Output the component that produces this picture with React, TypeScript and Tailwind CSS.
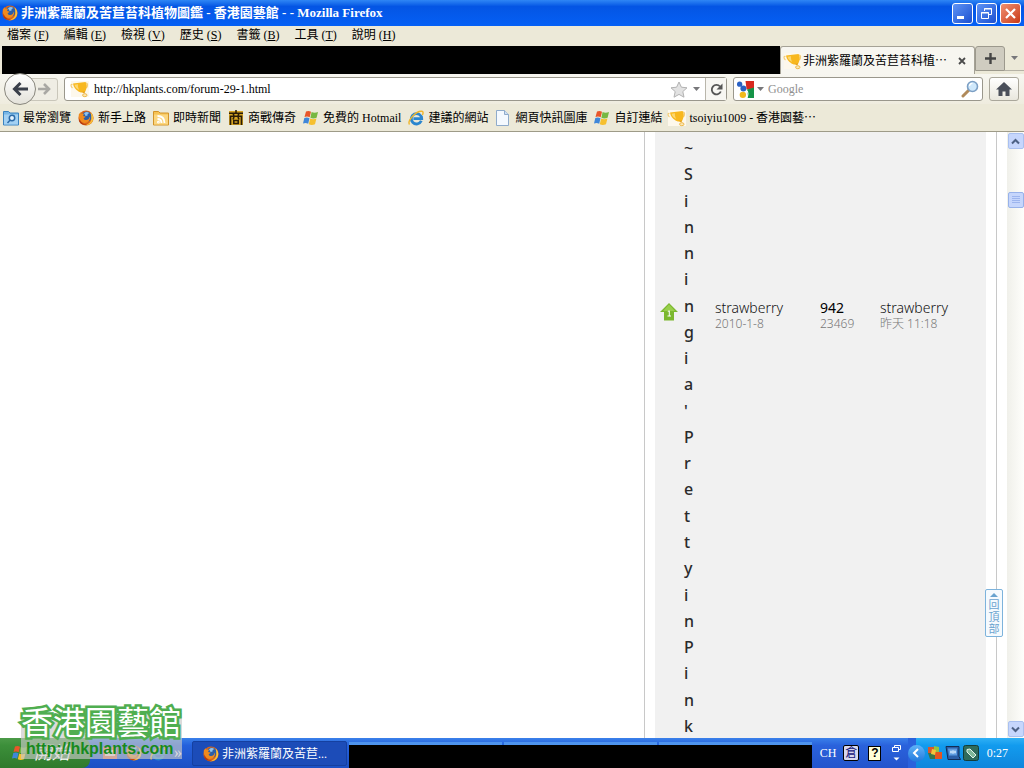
import type { ReactNode } from 'react'

const MENUS = [
  { label: '檔案', hotkey: 'F' },
  { label: '編輯', hotkey: 'E' },
  { label: '檢視', hotkey: 'V' },
  { label: '歷史', hotkey: 'S' },
  { label: '書籤', hotkey: 'B' },
  { label: '工具', hotkey: 'T' },
  { label: '說明', hotkey: 'H' },
]

const THREAD_TITLE = "~Sinningia'PrettyinPink"

function FirefoxIcon() {
  return (
    <svg width="16" height="16" viewBox="0 0 16 16" className="shrink-0">
      <circle cx="8" cy="8" r="7.6" fill="#d9641a" />
      <circle cx="8.6" cy="6.6" r="5.2" fill="#2b5fa8" />
      <path d="M6 3.2c2-1.6 4-1.4 5.4 0-1.6.2-2.2 1-1.8 2.2L7.6 6z" fill="#8fc3ee" />
      <path d="M.8 4.6C1.4 3.4 2 2.6 2.6 2.2l.6 1.6c1-.4 2-.3 2.8.2L5 6l2.6.6c-.4 1.2-1.4 1.2-2 1.8.8 1.8 3.4 2 5 .6.8-.7.6-1.6 1.4-2.2.5 3.6-2 6.2-5.2 6.2C3 13 .4 9 .8 4.6z" fill="#f08a1d" />
      <path d="M12.6 2.6c2.6 2 3.4 5.6 2 8.6-1.6 3.2-5 4.6-8.2 4 4-.4 6.6-3 6.9-6.4.1-2.2-.1-4.2-.7-6.2z" fill="#f9c23c" />
      <path d="M1.6 9c1 3.6 4 5.6 7.4 5.2-3 1.4-6.6.2-7.9-3z" fill="#b5390f" />
    </svg>
  )
}

function TrophyIcon() {
  return (
    <svg width="20" height="18" viewBox="0 0 20 18" className="shrink-0">
      <path d="M1 1h18v16H1z" fill="#fdf8ec" />
      <path d="M2.5 4.5C.5 3.5.5 6.500 2.500 8M16 3c2 0 2 3 .5 5" stroke="#f3cd78" strokeWidth="1.2" fill="none" />
      <path d="M3 3.5 15.500 2C17.500 4.500 17 8.500 15 12 12 13 9.500 12.500 8 11 5.500 9.500 3.500 7 3 3.500z" fill="#f8b81f" />
      <path d="M4.500 4.800 8 4.300c-.3 2 .2 4 1.200 5.700C6.800 9 5.200 7.300 4.500 4.800z" fill="#fcd873" />
      <path d="M11 11.500c1.500.5 3 .3 4-.3l-.5 2.300z" fill="#e39c16" />
      <ellipse cx="14.800" cy="15.200" rx="2.200" ry="1.500" fill="#fbe9b6" stroke="#efb84a" />
    </svg>
  )
}

function WindowsIcon() {
  return (
    <svg width="16" height="16" viewBox="0 0 16 16" className="shrink-0">
      <path d="M3 1.500c1.800-.9 3.400-.7 5 .2L6.700 7.300C5 6.400 3.400 6.300 1.500 7.100z" fill="#e8562a" />
      <path d="M8.600 2.100c1.900.9 4 .9 6.400 0L13.600 7.700c-2.200.9-4.300.9-6.200 0z" fill="#77b843" />
      <path d="M1.300 8c1.900-.8 3.500-.7 5.200.2L5.200 13.800C3.500 12.900 1.800 12.800 0 13.600z" fill="#3f87d9" />
      <path d="M7.200 8.600c1.900.9 4 .9 6.200 0L12 14.200c-2.200.9-4.300.9-6.200 0z" fill="#f6c02f" />
    </svg>
  )
}

function FolderIcon({ kind }: { kind: 'search' | 'feed' }) {
  const feed = kind === 'feed'
  return (
    <svg width="16" height="16" viewBox="0 0 16 16" className="shrink-0">
      <path d="M.5 1.500h5l1.500 1.500h8.500v12H.5z" fill={feed ? '#f6c254' : '#77b6e6'} stroke={feed ? '#d2942a' : '#3a83c0'} />
      <path d="M1 4.500h14v10H1z" fill={feed ? '#fbd67f' : '#a3d1f3'} />
      {feed ? (
        <g fill="none" stroke="#fff" strokeWidth="1.8">
          <path d="M4.500 6c4.500 0 7 2.500 7 7M4.500 9c2.500 0 4 1.500 4 4" />
          <circle cx="5.400" cy="12.200" r=".5" />
        </g>
      ) : (
        <g fill="none" stroke="#2c6ba8" strokeWidth="1.5">
          <circle cx="9" cy="8" r="2.700" fill="#e6f4ff" />
          <path d="M7.200 10 4.500 13" />
        </g>
      )}
    </svg>
  )
}

function ShopIcon() {
  return (
    <svg width="16" height="16" viewBox="0 0 16 16" className="shrink-0">
      <path d="M1 1h14v14H1z" fill="#d8a522" />
      <g fill="none" stroke="#2b1c06" strokeWidth="1.6">
        <path d="M8 0v3M1 3.300h14M5 3.500l1 2M11 3.500l-1 2M2.500 15V6.200h11V15M6 7l-1 2.500M10 7l1 2.500" />
        <path d="M5.800 10.500h4.400v3H5.800z" />
      </g>
    </svg>
  )
}

function IeIcon() {
  return (
    <svg width="16" height="16" viewBox="0 0 16 16" className="shrink-0">
      <path d="M13.300 10.800A5.200 5.200 0 1 1 13.700 8.600H5.400" fill="none" stroke="#2a86cf" strokeWidth="2.8" />
      <path d="M1.500 14.500C-1 11 8 .5 14 1.300c1.600.4 1.200 2.200.4 3.700" fill="none" stroke="#efb62c" strokeWidth="1.4" />
    </svg>
  )
}

function PageIcon() {
  return (
    <svg width="16" height="16" viewBox="0 0 16 16" className="shrink-0">
      <path d="M1.500.5h8l4 4v11h-12z" fill="#f4f9ff" stroke="#8fabcb" />
      <path d="M9.500.5v4h4" fill="#cfe0f3" stroke="#8fabcb" />
    </svg>
  )
}

function GoogleIcon() {
  return (
    <svg width="17" height="17" viewBox="0 0 16 16" className="shrink-0">
      <path d="M8 0h8v7L9 8z" fill="#d8291f" />
      <path d="M9.500 8l6.500-2v10H10z" fill="#159447" />
      <circle cx="2.500" cy="3" r="2.500" fill="#2961c4" />
      <circle cx="6" cy="7" r="2.800" fill="#2961c4" />
      <circle cx="5.500" cy="13" r="3" fill="#f1b91c" />
      <path d="M9 9c1.500 1 2 4 0 7" stroke="#fff" fill="none" />
    </svg>
  )
}

function Caret() {
  return (
    <svg width="7" height="4" viewBox="0 0 7 4" className="shrink-0">
      <path d="M0 0h7L3.500 4z" fill="#77777a" />
    </svg>
  )
}

const BOOKMARKS: { label: string; icon: ReactNode }[] = [
  { label: '最常瀏覽', icon: <FolderIcon kind="search" /> },
  { label: '新手上路', icon: <FirefoxIcon /> },
  { label: '即時新聞', icon: <FolderIcon kind="feed" /> },
  { label: '商戰傳奇', icon: <ShopIcon /> },
  { label: '免費的 Hotmail', icon: <WindowsIcon /> },
  { label: '建議的網站', icon: <IeIcon /> },
  { label: '網頁快訊圖庫', icon: <PageIcon /> },
  { label: '自訂連結', icon: <WindowsIcon /> },
  { label: 'tsoiyiu1009 - 香港園藝⋯', icon: <TrophyIcon /> },
]

function TitleBar() {
  return (
    <header className="flex h-[26px] shrink-0 items-center bg-linear-to-b from-[#2f86f5] via-[#0455e4] via-25% to-[#0560f5] pr-[3px] pl-0.5">
      <FirefoxIcon />
      <h1 className="ml-[3px] flex-1 truncate text-[13px] leading-5 font-bold text-white">
        非洲紫羅蘭及苦苣苔科植物圖鑑 - 香港園藝館 - - Mozilla Firefox
      </h1>
      <div className="flex gap-[3px]">
        <button aria-label="最小化" className="h-[21px] w-[21px] rounded-[3px] border border-white bg-linear-to-br from-[#5f93f5] to-[#1c4fd0]">
          <svg width="19" height="19" viewBox="0 0 19 19"><path d="M4 12h7v3H4z" fill="#fff" /></svg>
        </button>
        <button aria-label="還原" className="h-[21px] w-[21px] rounded-[3px] border border-white bg-linear-to-br from-[#5f93f5] to-[#1c4fd0]">
          <svg width="19" height="19" viewBox="0 0 19 19" fill="none" stroke="#fff">
            <path d="M7.500 7V4.500h7v6H12M7 5h8M4.500 8.500h7v6h-7zM4 9h8" />
          </svg>
        </button>
        <button aria-label="關閉" className="h-[21px] w-[21px] rounded-[3px] border border-white bg-linear-to-br from-[#f09070] to-[#c8360f]">
          <svg width="19" height="19" viewBox="0 0 19 19"><path d="M5 5l9 9M14 5l-9 9" stroke="#fff" strokeWidth="2.2" /></svg>
        </button>
      </div>
    </header>
  )
}

function NavBar() {
  return (
    <div className="flex h-[30px] shrink-0 items-center bg-linear-to-b from-[#f7f6f0] to-[#efecdf] pr-[5px] pl-1">
      <button aria-label="上一頁" className="z-10 flex h-8 w-8 shrink-0 items-center justify-center rounded-full border border-[#88867d] bg-linear-to-b from-white to-[#e4e2da]">
        <svg width="16" height="14" viewBox="0 0 16 14" fill="none" stroke="#3a3f4a" strokeWidth="3">
          <path d="M8.500 1 2.500 7l6 6M3 7h13" />
        </svg>
      </button>
      <button aria-label="下一頁" className="-ml-1.5 flex h-[23px] w-7 shrink-0 items-center justify-center rounded-r-[3px] border border-[#c9c6ba] bg-[#efede4]">
        <svg width="13" height="12" viewBox="0 0 13 12" fill="none" stroke="#a9a8a4" strokeWidth="2.600">
          <path d="M6 1l5 5-5 5M11 6H0" />
        </svg>
      </button>
      <div className="ml-1.5 flex h-6 flex-1 items-center rounded-[3px] border border-[#9a978c] bg-white">
        <span className="ml-[5px]"><TrophyIcon /></span>
        <input aria-label="網址" defaultValue="http://hkplants.com/forum-29-1.html" className="ml-1 min-w-0 flex-1 bg-transparent text-xs outline-none" />
        <button aria-label="加入書籤">
          <svg width="18" height="17" viewBox="0 0 18 17">
            <path d="M9 1l2.400 5.200 5.600.6-4.200 3.800 1.200 5.600L9 13.400 4 16.200l1.200-5.600L1 6.800l5.600-.6z" fill="#e2e2e2" stroke="#b2b2b2" />
          </svg>
        </button>
        <span className="mx-[5px]"><Caret /></span>
        <button aria-label="重新載入" className="flex h-full w-[21px] items-center justify-center border-l border-[#b9b6ab] bg-[#f7f6f2]">
          <svg width="13" height="13" viewBox="0 0 13 13">
            <path d="M10.800 8.500A4.700 4.700 0 1 1 10 3.500" fill="none" stroke="#555" strokeWidth="1.800" />
            <path d="M12.500.5v6h-6z" fill="#555" />
          </svg>
        </button>
      </div>
      <div className="ml-1.5 flex h-6 w-[250px] items-center rounded-[3px] border border-[#9a978c] bg-white px-[3px]">
        <GoogleIcon />
        <span className="ml-[3px]"><Caret /></span>
        <input aria-label="搜尋" placeholder="Google" className="ml-1 min-w-0 flex-1 bg-transparent text-xs outline-none placeholder:text-[#8f8f8f]" />
        <button aria-label="開始搜尋" className="shrink-0">
          <svg width="18" height="18" viewBox="0 0 18 18">
            <path d="M2 16l6-6" stroke="#b08a5a" strokeWidth="3" strokeLinecap="round" />
            <circle cx="11.500" cy="6.500" r="5" fill="#cfe8fb" stroke="#7c9fc4" strokeWidth="1.600" />
            <path d="M8.500 6a3 3 0 0 1 3-2.600" stroke="#fff" strokeWidth="1.300" fill="none" />
          </svg>
        </button>
      </div>
      <button aria-label="首頁" className="ml-1.5 flex h-6 w-[30px] items-center justify-center rounded-[3px] border border-[#aaa79b] bg-linear-to-b from-white to-[#e9e7dd]">
        <svg width="16" height="14" viewBox="0 0 16 14">
          <path d="M8 0l8 7.500h-2.500V14h-4V9.500h-3V14h-4V7.500H0z" fill="#4a4f5a" />
        </svg>
      </button>
    </div>
  )
}

function ForumPage() {
  return (
    <main className="relative flex min-h-0 flex-1 overflow-hidden bg-white font-['Noto_Sans','Noto_Sans_CJK_TC',sans-serif]">
      <div className="flex-1" />
      <div className="w-[353px] border-x border-[#c8c8c8] px-2.5">
        <table className="h-full w-full table-fixed bg-[#f1f1f1]">
          <colgroup>
            <col className="w-[29px]" />
            <col className="w-[31px]" />
            <col className="w-[105px]" />
            <col className="w-[60px]" />
            <col />
          </colgroup>
          <tbody>
            <tr className="h-full align-top">
              <td className="pt-[171px] pl-[5px]">
                <svg width="18" height="18" viewBox="0 0 18 18">
                  <path d="M9 0l9 9h-4v8.500H4V9H0z" fill="#7cb82f" />
                  <path d="M9 1.500L15 8H3z" fill="#98cf4c" />
                  <path d="M7.800 8.500 9.300 7.800V13M7.500 13h3.500" stroke="#fff" fill="none" />
                </svg>
              </td>
              <td className="h-full">
                <a href="#thread" className="-mb-1 flex h-full flex-col justify-between pt-1 text-base leading-6 font-medium text-[#2b2b2b]">
                  {THREAD_TITLE.split('').map((letter, i) => (
                    <span key={i}>{letter}</span>
                  ))}
                </a>
              </td>
              <td className="pt-[168px]">
                <a href="#author" className="block text-sm leading-4 font-light text-[#111]">strawberry</a>
                <span className="block text-xs leading-4 font-light text-[#777]">2010-1-8</span>
              </td>
              <td className="pt-[168px]">
                <a href="#replies" className="block text-sm leading-4 text-black">942</a>
                <span className="block text-xs leading-4 font-light text-[#777]">23469</span>
              </td>
              <td className="pt-[168px]">
                <a href="#last" className="block text-sm leading-4 font-light text-[#111]">strawberry</a>
                <a href="#last" className="block text-xs leading-4 font-light text-[#777]">昨天 11:18</a>
              </td>
            </tr>
          </tbody>
        </table>
      </div>
      <div className="w-2.5" />

      {/* Scrollbar */}
      <div className="flex w-[17px] flex-col items-center bg-linear-to-r from-[#f0f0ea] to-[#fefefb] py-px">
        <button aria-label="向上捲動" className="flex h-4 w-4 items-center justify-center rounded-[2px] border border-[#a9c0f0] bg-[#c6d6fc]">
          <svg width="9" height="7" viewBox="0 0 9 7"><path d="M1 5.500 4.500 2 8 5.500" fill="none" stroke="#4d6185" strokeWidth="2" /></svg>
        </button>
        <div className="mt-[43px] flex h-4 w-4 items-center justify-center rounded-[2px] border border-[#98b2ea] bg-[#c6d6fc]">
          <svg width="8" height="8" viewBox="0 0 8 8"><path d="M0 .5h8M0 2.500h8M0 4.500h8M0 6.500h8" stroke="#9db5ee" /></svg>
        </div>
        <button aria-label="向下捲動" className="mt-auto flex h-4 w-4 items-center justify-center rounded-[2px] border border-[#a9c0f0] bg-[#c6d6fc]">
          <svg width="9" height="7" viewBox="0 0 9 7"><path d="M1 1.500 4.500 5 8 1.500" fill="none" stroke="#4d6185" strokeWidth="2" /></svg>
        </button>
      </div>

      <a href="#top" className="absolute right-[21px] bottom-[101px] flex w-[18px] flex-col items-center rounded-[2px] border border-[#7db3dc] bg-[#f5fafe] pt-[3px] pb-px text-[11px] leading-3 text-[#6aa3cf]">
        <svg width="8" height="4" viewBox="0 0 8 4" className="mb-0.5"><path d="M4 0l4 4H0z" fill="#6aa3cf" /></svg>
        <span>回</span>
        <span>頂</span>
        <span>部</span>
      </a>
    </main>
  )
}

function Taskbar() {
  return (
    <footer className="flex h-[30px] shrink-0 items-stretch bg-linear-to-b from-[#3a80ea] via-[#2460dc] via-25% to-[#1c50c4] text-white">
      <button className="flex w-[90px] items-center gap-1.5 rounded-r-lg bg-linear-to-b from-[#4c9a48] via-[#3c8f3a] via-25% to-[#2f7a2c] pl-3 text-lg leading-6 text-white italic">
        <WindowsIcon />
        開始
      </button>
      <div className="flex w-[102px] items-center gap-2 pl-3">
        <svg width="16" height="16" viewBox="0 0 16 16">
          <path d="M1 2h14v12H1z" fill="#e96a4c" />
          <path d="M3 5h10v6H3z" fill="#fbe3d8" />
        </svg>
        <FirefoxIcon />
        <IeIcon />
        <span className="text-base leading-4">»</span>
      </div>
      <button className="mt-[3px] mb-0.5 flex w-[155px] items-center gap-[3px] rounded-[2px] border border-[#1540a0] bg-[#1c4cb8] pl-2.5 text-xs text-white">
        <FirefoxIcon />
        <span>非洲紫羅蘭及苦苣...</span>
      </button>
      {/* Other task buttons, only their top edges stay visible */}
      <div className="ml-0.5 flex flex-1 flex-col pt-1">
        <div className="grid h-[3px] grid-cols-3 gap-x-0.5">
          <span className="bg-[#4e94ee]" />
          <span className="bg-[#4e94ee]" />
          <span className="bg-[#4e94ee]" />
        </div>
        <div className="flex-1 bg-black" />
      </div>
      <div className="flex w-24 items-center gap-[7px] bg-linear-to-b from-[#3a80ea] via-[#2a62dc] via-25% to-[#2454cc] pl-2 text-xs">
        <span>CH</span>
        <span className="flex h-4 w-4 items-center justify-center rounded-[2px] border border-black bg-[#d8d8ee] leading-3 text-[#14147a]">倉</span>
        <span className="ml-0.5 flex h-[15px] w-[13px] items-center justify-center border border-black bg-[#ffffd8] font-['Liberation_Sans'] text-xs leading-3 font-bold text-black">?</span>
        <svg width="9" height="16" viewBox="0 0 9 16" className="ml-1">
          <path d="M2.500 3V.5h6v4H6.500M.5 2.500h6v4h-6z" fill="none" stroke="#fff" />
          <path d="M1.500 12.500h6l-3 3z" fill="#fff" />
        </svg>
      </div>
      <div className="flex items-center bg-[linear-gradient(to_right,#2a62dc_8px,transparent_8px),linear-gradient(#2fb0f5,#129bee_25%,#0f86dc)] pr-4 text-xs">
        <button aria-label="顯示圖示" className="flex h-[17px] w-[17px] items-center justify-center rounded-full bg-linear-to-b from-[#5fb4f8] to-[#1f78dc]">
          <svg width="8" height="10" viewBox="0 0 8 10"><path d="M6 1 2 5l4 4" fill="none" stroke="#fff" strokeWidth="2" /></svg>
        </button>
        <svg width="16" height="16" viewBox="0 0 16 16" className="ml-0.5">
          <path d="M1 2h7v6H1z" fill="#d9572b" />
          <path d="M7 1l5 1v6H7z" fill="#8fc443" />
          <path d="M1 8h7v6H3z" fill="#37764a" />
          <path d="M8 7h7v7H8z" fill="#e4551f" />
          <path d="M5 4l4 1-1 5-4-1z" fill="#f2c33b" />
        </svg>
        <svg width="16" height="16" viewBox="0 0 16 16" className="ml-0.5">
          <path d="M1 1.500h13v10l1.500 3H3z" fill="#2b5fa8" stroke="#122c55" />
          <path d="M3 3.500h9v7H4z" fill="#5c9be0" />
          <path d="M5 7h6M6 5.500v3M8 5v4M10 5.500v3" stroke="#d8ecff" />
        </svg>
        <svg width="16" height="16" viewBox="0 0 16 16" className="ml-0.5">
          <rect x=".5" y=".5" width="15" height="15" rx="2" fill="#2f6b5c" stroke="#143d38" />
          <path d="M4 4.500 7 4l6 6-3 3-6-6z" fill="#7fb89b" stroke="#e4f4ea" />
        </svg>
        <time className="ml-2">0:27</time>
      </div>
    </footer>
  )
}

export default function App() {
  return (
    <div className="relative flex h-screen flex-col overflow-hidden bg-[#ece9d8] font-['Liberation_Serif','Noto_Sans_CJK_TC',serif] text-black">
      <TitleBar />

      <nav className="flex h-[18px] shrink-0 items-center gap-[15px] pl-[7px] text-xs">
        {MENUS.map((menu) => (
          <button key={menu.hotkey} className="leading-4">
            {menu.label} (<u>{menu.hotkey}</u>)
          </button>
        ))}
      </nav>

      {/* Tab strip */}
      <div className="flex h-[30px] shrink-0 items-stretch pt-0.5 pl-0.5">
        <div className="flex-1 bg-black" />
        <div className="flex w-[195px] items-center rounded-t-[3px] border border-b-0 border-[#a5a296] bg-[#f7f6f0] pr-1 pl-0.5">
          <TrophyIcon />
          <span className="flex-1 truncate text-xs leading-4">非洲紫羅蘭及苦苣苔科植⋯</span>
          <button aria-label="關閉分頁" className="p-1">
            <svg width="8" height="8" viewBox="0 0 8 8"><path d="M1 1l6 6M7 1 1 7" stroke="#4b4b4b" strokeWidth="1.800" /></svg>
          </button>
        </div>
        <button aria-label="開新分頁" className="mb-[3px] flex w-[30px] items-center justify-center rounded-t-[3px] border border-[#9c998d] bg-[#cfccc0]">
          <svg width="11" height="11" viewBox="0 0 11 11"><path d="M5.500 0v11M0 5.500h11" stroke="#444" strokeWidth="2.400" /></svg>
        </button>
        <button aria-label="列出所有分頁" className="mb-[3px] flex w-[19px] items-center justify-center border-b border-[#b5b2a6]">
          <Caret />
        </button>
      </div>

      <NavBar />

      <nav className="flex h-7 shrink-0 items-center gap-[7px] border-b border-[#9e9b88] pl-[3px] text-xs">
        {BOOKMARKS.map((bookmark) => (
          <a key={bookmark.label} href="#bookmark" className="flex items-center gap-1 leading-4 whitespace-nowrap">
            <span className="flex w-4 justify-center">{bookmark.icon}</span>
            {bookmark.label}
          </a>
        ))}
      </nav>

      <ForumPage />
      <Taskbar />

      {/* Site watermark */}
      <div className="pointer-events-none absolute bottom-[9px] left-[21px] h-[46px] w-[161px] bg-[#c8c8c8]/65">
        <div className="-mt-1.5 text-[32px] leading-8 whitespace-nowrap text-white [-webkit-text-stroke:5px_#4fae50] [paint-order:stroke_fill]">
          香港園藝館
        </div>
        <div className="pl-[5px] font-['Liberation_Sans',sans-serif] text-base leading-5 font-bold text-[#178a1c]">
          http://hkplants.com
        </div>
      </div>
    </div>
  )
}
